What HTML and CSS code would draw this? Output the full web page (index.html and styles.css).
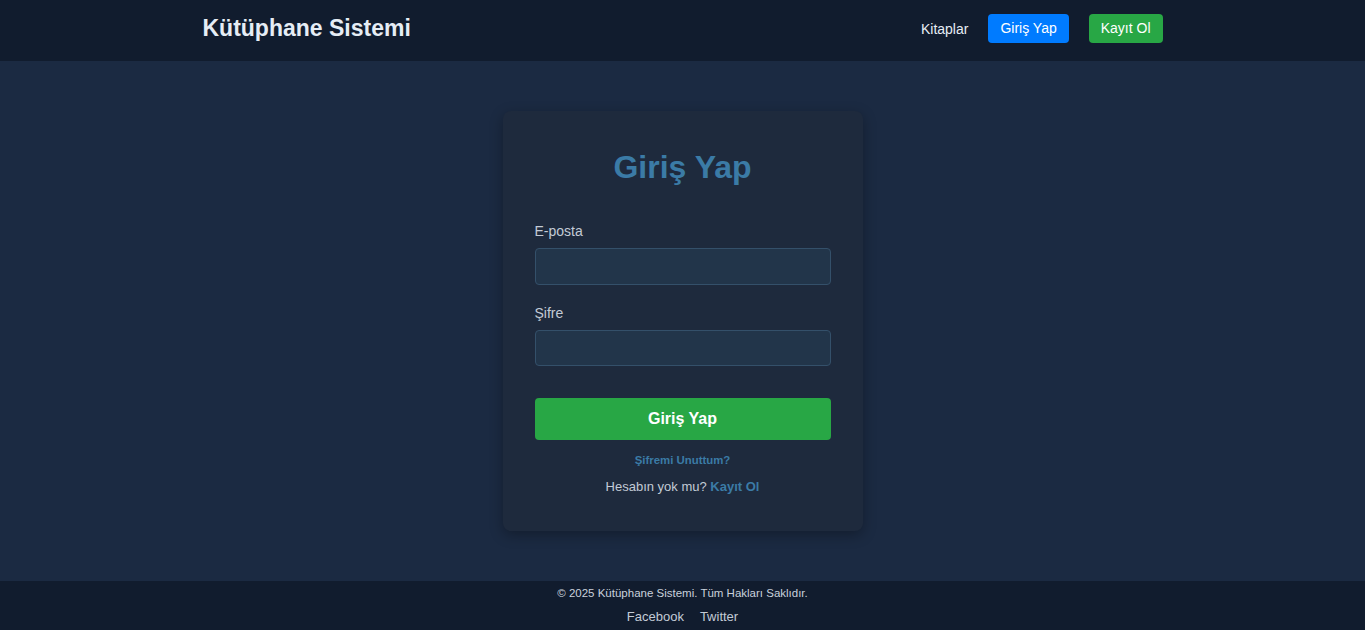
FILE: index.html
```html
<!DOCTYPE html>
<html lang="tr">
<head>
<meta charset="utf-8">
<title>Giriş Yap - Kütüphane Sistemi</title>
<link rel="stylesheet" href="styles.css">
</head>
<body>
<header class="site-header">
  <div class="container header-inner">
    <a class="logo" href="#">Kütüphane Sistemi</a>
    <nav class="nav">
      <a class="nav-link" href="#">Kitaplar</a>
      <a class="nav-btn btn-blue" href="#">Giriş Yap</a>
      <a class="nav-btn btn-green" href="#">Kayıt Ol</a>
    </nav>
  </div>
</header>
<main class="main">
  <div class="card">
    <h2 class="card-title">Giriş Yap</h2>
    <form class="form">
      <div class="form-group">
        <label class="label" for="email">E-posta</label>
        <input class="input" id="email" type="email">
      </div>
      <div class="form-group">
        <label class="label" for="pass">Şifre</label>
        <input class="input" id="pass" type="password">
      </div>
      <button class="submit" type="button">Giriş Yap</button>
    </form>
    <p class="forgot"><a href="#">Şifremi Unuttum?</a></p>
    <p class="signup">Hesabın yok mu? <a href="#">Kayıt Ol</a></p>
  </div>
</main>
<footer class="site-footer">
  <p class="copy">© 2025 Kütüphane Sistemi. Tüm Hakları Saklıdır.</p>
  <div class="social">
    <a href="#">Facebook</a>
    <a href="#">Twitter</a>
  </div>
</footer>
</body>
</html>
```
FILE: styles.css
```css
* { box-sizing: border-box; }
html, body { margin: 0; padding: 0; }
body {
  font-family: "Liberation Sans", Arial, sans-serif;
  background: #1b2a42;
  color: #c9d1dc;
}
a { text-decoration: none; }

.container { width: 960px; margin: 0 auto; }

.site-header {
  background: #111c2e;
  height: 61px;
}
.header-inner {
  height: 57px;
  display: flex;
  align-items: center;
  justify-content: space-between;
}
.logo {
  color: #e6edf5;
  font-size: 23px;
  font-weight: bold;
}
.nav {
  display: flex;
  align-items: center;
  gap: 20px;
}
.nav-link {
  color: #e6edf5;
  font-size: 14px;
}
.nav-btn {
  color: #fff;
  font-size: 14px;
  line-height: 17px;
  padding: 6px 12px;
  border-radius: 4px;
}
.btn-blue { background: #007bff; }
.btn-green { background: #28a745; }

.main {
  display: flex;
  justify-content: center;
  padding: 50px 0;
}
.card {
  width: 360px;
  height: 420px;
  background: #1e2a3d;
  border-radius: 8px;
  padding: 32px;
  box-shadow: 0 4px 14px rgba(0, 0, 0, 0.3);
}
.card-title {
  margin: 6px 0 37px;
  text-align: center;
  color: #3b7ba6;
  font-size: 32px;
  line-height: 37px;
  font-weight: bold;
}
.form-group { margin-bottom: 20px; }
.label {
  display: block;
  font-size: 14px;
  line-height: 17px;
  margin-bottom: 8px;
  color: #c3cbd6;
}
.input {
  display: block;
  width: 100%;
  height: 36.5px;
  background: #22354a;
  border: 1px solid #34506a;
  border-radius: 4px;
  outline: none;
}
.submit {
  display: block;
  width: 100%;
  height: 42px;
  margin-top: 32px;
  border: none;
  border-radius: 4px;
  background: #28a745;
  color: #fff;
  font-family: "Liberation Sans", Arial, sans-serif;
  font-size: 16px;
  font-weight: bold;
}
.forgot {
  margin: 13px 0 0;
  text-align: center;
  font-size: 11.4px;
  line-height: 14px;
}
.forgot a { color: #3b7ba6; font-weight: bold; }
.signup {
  margin: 12px 0 0;
  text-align: center;
  font-size: 13px;
  line-height: 16px;
  color: #c3cbd6;
}
.signup a { color: #3b7ba6; font-weight: bold; }

.site-footer {
  background: #111c2e;
  padding: 5px 0 5px;
  text-align: center;
}
.copy {
  margin: 0 0 9px;
  font-size: 11.5px;
  line-height: 14px;
  color: #c9d1dc;
}
.social {
  display: flex;
  justify-content: center;
  gap: 16px;
  font-size: 13px;
  line-height: 16px;
}
.social a { color: #c3cbd6; }
```
